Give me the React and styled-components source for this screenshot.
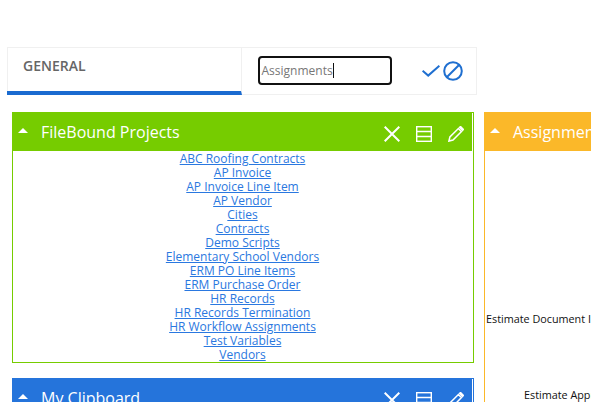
import React from "react";
import styled, { createGlobalStyle } from "styled-components";

const links = [
  "ABC Roofing Contracts",
  "AP Invoice",
  "AP Invoice Line Item",
  "AP Vendor",
  "Cities",
  "Contracts",
  "Demo Scripts",
  "Elementary School Vendors",
  "ERM PO Line Items",
  "ERM Purchase Order",
  "HR Records",
  "HR Records Termination",
  "HR Workflow Assignments",
  "Test Variables",
  "Vendors",
];

const CloseIcon = () => (
  <svg width="16" height="16" viewBox="0 0 16 16" fill="none" stroke="#fff" strokeWidth="2">
    <path d="M0.7 0.7 15.3 15.3M15.3 0.7 0.7 15.3" />
  </svg>
);

const RowsIcon = () => (
  <svg width="16" height="16" viewBox="0 0 16 16" fill="none" stroke="#fff" strokeWidth="1.4">
    <rect x="0.7" y="0.7" width="14.6" height="14.6" />
    <path d="M0.7 5.5H15.3M0.7 10.5H15.3" />
  </svg>
);

const PencilIcon = () => (
  <svg width="16" height="16" viewBox="0 0 16 16" fill="none" stroke="#fff" strokeWidth="1.5">
    <path d="M0.9 15.1 1.9 11 10.4 2.5 13.5 5.6 5 14.1Z" />
    <path d="M11.6 1.4 12.6 0.6 15.4 3.4 14.6 4.4Z" fill="#fff" />
  </svg>
);

const CheckIcon = () => (
  <svg width="18" height="12" viewBox="0 0 18 12" fill="none" stroke="#1f6fd0" strokeWidth="2">
    <path d="M0.6 5.8 6.2 10.6 17.4 0.8" />
  </svg>
);

const BanIcon = () => (
  <svg width="20" height="20" viewBox="0 0 20 20" fill="none" stroke="#1f6fd0" strokeWidth="2">
    <circle cx="10" cy="10" r="8.8" />
    <path d="M16 4 4 16" />
  </svg>
);

const Panel = ({ title, color, open, children }) => (
  <PanelBox $color={color} $open={open}>
    <PanelHeader $color={color}>
      <Arrow />
      <PanelTitle>{title}</PanelTitle>
      <PanelTools>
        <CloseIcon />
        <RowsIcon />
        <PencilIcon />
      </PanelTools>
    </PanelHeader>
    {children}
  </PanelBox>
);

const App = () => {
  return (
    <Page>
      <GlobalStyle />
      <TabBar>
        <Tab>GENERAL</Tab>
        <EditTab>
          <NameInput>
            Assignments
            <Caret />
          </NameInput>
          <EditActions>
            <CheckIcon />
            <BanIcon />
          </EditActions>
        </EditTab>
      </TabBar>
      <Columns>
        <Column>
          <Panel title="FileBound Projects" color="#76cc00">
            <LinkList>
              {links.map((l) => (
                <LinkItem href="#" key={l}>
                  {l}
                </LinkItem>
              ))}
            </LinkList>
          </Panel>
          <Panel title="My Clipboard" color="#2574db" />
        </Column>
        <Column>
          <Panel title="Assignments" color="#fbb829" open>
            <ChartBody>
              <ChartLabel $indent={1} $top={161}>
                Estimate Document Index
              </ChartLabel>
              <ChartLabel $indent={39} $top={62}>
                Estimate Approval
              </ChartLabel>
            </ChartBody>
          </Panel>
        </Column>
      </Columns>
    </Page>
  );
};

export default App;

const GlobalStyle = createGlobalStyle`
  html, body {
    margin: 0;
    padding: 0;
    background: #fff;
    overflow: hidden;
  }
  body {
    font-family: "Open Sans", "Liberation Sans", sans-serif;
  }
`;

const Page = styled.div`
  width: 591px;
  height: 402px;
  overflow: hidden;
  padding-top: 47px;
  box-sizing: border-box;
`;

const TabBar = styled.div`
  display: flex;
  width: 470px;
  height: 48px;
  margin-left: 7px;
  box-sizing: border-box;
  border: 1px solid #f0f0f0;
`;

const Tab = styled.div`
  width: 235px;
  box-sizing: border-box;
  margin: 0 0 -1px -1px;
  padding: 3px 0 0 16px;
  border-right: 1px solid #f0f0f0;
  border-bottom: 4px solid #1a6bd0;
  font-size: 14px;
  line-height: 30px;
  font-weight: 600;
  color: #666;
`;

const EditTab = styled.div`
  flex: 1;
  display: flex;
  align-items: center;
  padding: 0 0 1px 16px;
`;

const NameInput = styled.div`
  display: flex;
  align-items: center;
  width: 134px;
  height: 29px;
  box-sizing: border-box;
  border: 2px solid #111;
  border-radius: 4px;
  padding-left: 1.5px;
  font-size: 12px;
  color: #777;
`;

const Caret = styled.span`
  width: 1px;
  height: 15px;
  background: #111;
`;

const EditActions = styled.div`
  display: flex;
  align-items: center;
  gap: 3px;
  margin-left: 30px;
`;

const Columns = styled.div`
  display: flex;
  gap: 10px;
  margin: 17px 0 0 12px;
  width: 934px;
`;

const Column = styled.div`
  width: 462px;
  display: flex;
  flex-direction: column;
  gap: 15px;
`;

const PanelBox = styled.section`
  border: 1px solid ${(p) => p.$color};
  ${(p) => p.$open && "border-right: 0;"}
`;

const PanelHeader = styled.header`
  display: flex;
  align-items: center;
  height: 39px;
  margin: -1px 1px 0 -1px;
  padding: 0 8px 0 6px;
  background: ${(p) => p.$color};
  color: #fff;
`;

const Arrow = styled.span`
  width: 0;
  height: 0;
  border-left: 5px solid transparent;
  border-right: 5px solid transparent;
  border-bottom: 5px solid #fff;
  margin-bottom: 2px;
`;

const PanelTitle = styled.h3`
  margin: 0 0 0 13px;
  font-size: 16px;
  line-height: 22px;
  font-weight: 400;
`;

const PanelTools = styled.div`
  margin: 5px 0 0 auto;
  display: flex;
  align-items: center;
  gap: 16px;
`;

const LinkList = styled.div`
  display: flex;
  flex-direction: column;
  align-items: center;
  padding: 1px 1px 0 0;
`;

const LinkItem = styled.a`
  font-size: 12px;
  line-height: 14px;
  color: #2a78e0;
  text-decoration: underline;
`;

const ChartBody = styled.div`
  height: 300px;
`;

const ChartLabel = styled.div`
  margin: ${(p) => p.$top}px 0 0 ${(p) => p.$indent}px;
  font-size: 10.8px;
  line-height: 14px;
  color: #111;
  white-space: nowrap;
`;
